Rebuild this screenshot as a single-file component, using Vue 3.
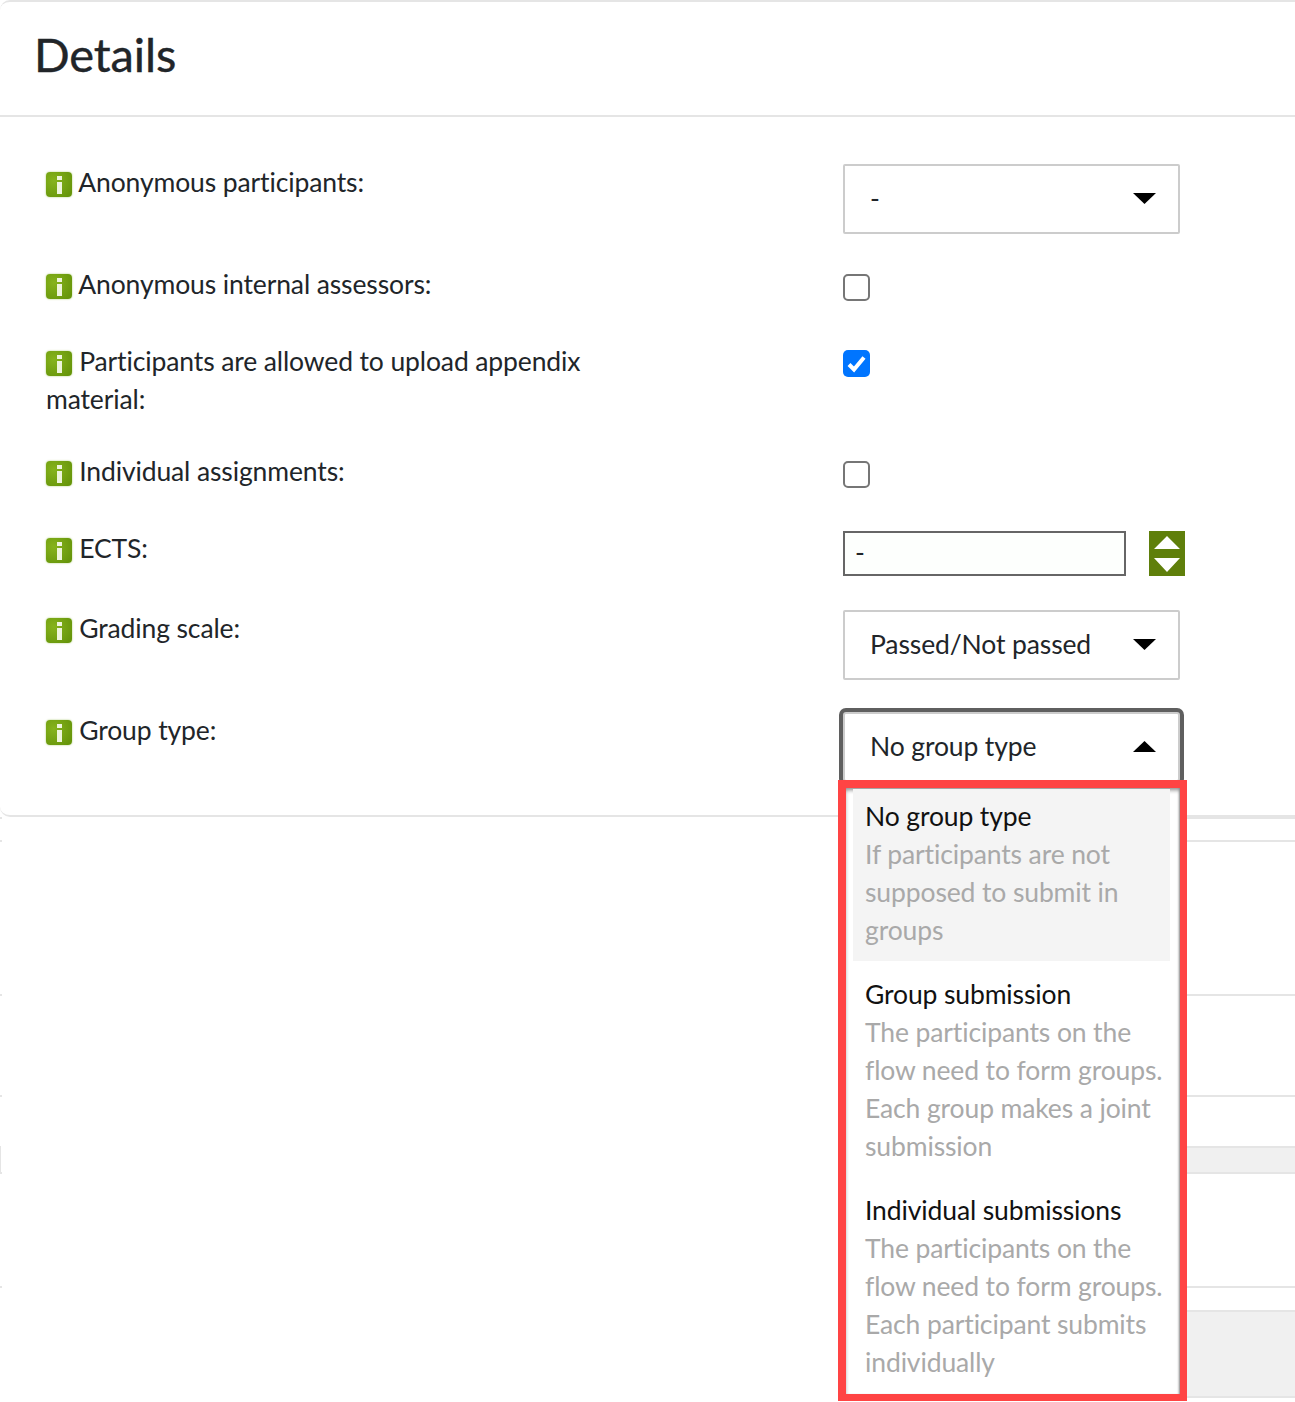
<script setup>
const rows = [
  { label: 'Anonymous participants:', type: 'select', value: '-' },
  { label: 'Anonymous internal assessors:', type: 'check', checked: false, cls: 'row--check' },
  { label: 'Participants are allowed to upload appendix material:', type: 'check', checked: true, cls: 'row--wrap' },
  { label: 'Individual assignments:', type: 'check', checked: false, cls: 'row--check' },
  { label: 'ECTS:', type: 'number', cls: 'row--number' },
  { label: 'Grading scale:', type: 'select', value: 'Passed/Not passed' },
  { label: 'Group type:', type: 'open', value: 'No group type' },
]

const options = [
  { title: 'No group type', text: 'If participants are not\nsupposed to submit in\ngroups', active: true },
  { title: 'Group submission', text: 'The participants on the\nflow need to form groups.\nEach group makes a joint\nsubmission' },
  { title: 'Individual submissions', text: 'The participants on the\nflow need to form groups.\nEach participant submits\nindividually' },
]

const lower = [
  { h: 23 },
  { h: 154 },
  { h: 101 },
  { h: 51 },
  { h: 26, band: true },
  { h: 114 },
  { h: 24 },
  { h: 88, band: true, last: true },
]
</script>

<template>
  <div class="page">
    <section class="card">
      <h1 class="card-title">Details</h1>
      <div class="card-body">
        <div v-for="r in rows" :key="r.label" :class="['row', r.cls]">
          <div class="row-label"><span class="info"></span> {{ r.label }}</div>
          <div class="row-control">
            <div v-if="r.type === 'select'" class="select">
              <span class="select-value">{{ r.value }}</span>
              <svg class="caret" viewBox="0 0 23 11"><path d="M0 0h23L11.5 11z" /></svg>
            </div>

            <span v-else-if="r.type === 'check'" :class="['check', r.checked && 'check--on']">
              <svg v-if="r.checked" viewBox="0 0 27 27">
                <path d="M6 14.5l5 5 10-12" fill="none" stroke="#fff" stroke-width="4" />
              </svg>
            </span>

            <div v-else-if="r.type === 'number'" class="number">
              <div class="number-input">-</div>
              <svg class="spinner" viewBox="0 0 36 45">
                <rect width="36" height="45" fill="#5f7f0b" />
                <path d="M5 18L18 5l13 13z M5 27h26L18 41z" fill="#fff" />
              </svg>
            </div>

            <div v-else class="select select--open">
              <span class="select-value">{{ r.value }}</span>
              <svg class="caret" viewBox="0 0 23 11"><path d="M0 11h23L11.5 0z" /></svg>
              <ul class="menu">
                <li v-for="o in options" :key="o.title" :class="['menu-item', o.active && 'menu-item--active']">
                  <div class="menu-title">{{ o.title }}</div>
                  <div class="menu-text">{{ o.text }}</div>
                </li>
              </ul>
            </div>
          </div>
        </div>
      </div>
    </section>

    <!-- what is left of the page behind the menu -->
    <div class="lower">
      <div
        v-for="(l, i) in lower"
        :key="i"
        :class="['lower-row', l.band && 'lower-row--band', l.last && 'lower-row--last']"
        :style="{ height: l.h + 'px' }"
      >
        <span class="lower-tick"></span>
        <span class="lower-cell"></span>
      </div>
    </div>
  </div>
</template>

<style>
body {
  margin: 0;
  background: #fff;
  overflow: hidden;
}
</style>

<style scoped>
.page {
  width: 1295px;
  height: 1402px;
  overflow: hidden;
  font-family: Lato, sans-serif;
  font-size: 26.5px;
  letter-spacing: -0.12px;
  line-height: 38px;
  color: #212529;
}

.card {
  border-top: 2px solid #e5e5e5;
  border-bottom: 2px solid #e5e5e5;
  border-radius: 10px 0 0 10px;
  height: 817px;
  box-sizing: border-box;
}

.card-title {
  margin: 0;
  height: 115px;
  padding: 22px 0 0 34px;
  box-sizing: border-box;
  border-bottom: 2px solid #e5e5e5;
  font-size: 47px;
  line-height: 60px;
  font-weight: 400;
  -webkit-text-stroke: 0.4px #212529;
}

.card-body {
  display: flex;
  flex-direction: column;
  gap: 32px;
  padding: 47px 0 0 46px;
}

.row {
  display: flex;
}

.row--check {
  padding-bottom: 7px;
}

.row--wrap {
  padding-bottom: 2px;
}

.row--number {
  padding-bottom: 2px;
}

.row-label {
  width: 560px;
  margin: -1px 237px 1px 0;
}

.info {
  display: inline-block;
  position: relative;
  width: 26px;
  height: 25px;
  margin-right: 0.5px;
  vertical-align: -5px;
  border-radius: 4px;
  background: radial-gradient(circle at 30% 35%, #86b31c, #66950a 85%);
  box-shadow: 0 0 2px #a5c76a;
}

.info::before,
.info::after {
  content: "";
  position: absolute;
  left: 11px;
  width: 5px;
  background: #eef5dc;
}

.info::before {
  top: 4px;
  height: 4px;
}

.info::after {
  top: 10px;
  height: 12px;
}

.row-control {
  width: 337px;
}

.select {
  position: relative;
  display: flex;
  align-items: center;
  justify-content: space-between;
  height: 70px;
  box-sizing: border-box;
  padding: 0 22px 0 25px;
  border: 2px solid #ccc;
  border-radius: 2px;
  background: #fff;
}

.select-value {
  margin-top: -3px;
}

.select--open {
  box-shadow: 0 0 0 4px #5f5f5f;
  border-radius: 3px;
}

.caret {
  width: 23px;
  height: 11px;
  margin-top: -2px;
}

.check {
  display: block;
  width: 27px;
  height: 27px;
  margin-top: 8px;
  box-sizing: border-box;
  border: 2px solid #767676;
  border-radius: 5px;
}

.check--on {
  margin-top: 7px;
  border: 0;
  background: #0075ff;
}

.check svg {
  display: block;
}

.number {
  display: flex;
  width: 342px;
  justify-content: space-between;
  margin-top: 1px;
}

.number-input {
  width: 283px;
  height: 45px;
  box-sizing: border-box;
  padding-left: 10px;
  border: 2px solid #666;
  background: #fdfffd;
  line-height: 38px;
}

.spinner {
  width: 36px;
  height: 45px;
}

.menu {
  position: absolute;
  top: 66px;
  left: -7px;
  width: 349px;
  height: 621px;
  box-sizing: border-box;
  margin: 0;
  padding: 1px 10px 0 7px;
  list-style: none;
  background: #fff;
  border: 8px solid #ff4444;
  border-width: 8px 7px 7px 8px;
  box-shadow: inset 0 3px 4px -1px #888, inset -2px 0 2px -1px #999;
  z-index: 2;
}

.menu-item {
  padding: 8px 0 12px 12px;
  margin-bottom: 6px;
}

.menu-item--active {
  background: #f4f4f4;
}

.menu-title {
  color: #111;
}

.menu-text {
  color: #a9a9a9;
  white-space: pre-line;
}

.lower-row {
  display: flex;
}

.lower-tick {
  width: 2px;
  height: 2px;
  background: #e5e5e5;
}

.lower-cell {
  width: 195px;
  margin-left: auto;
  border-top: 2px solid #e5e5e5;
}

.lower-row--band .lower-tick {
  height: 100%;
  width: 1px;
}

.lower-row--band .lower-cell {
  background: #f0f0f0;
}

.lower-row--last .lower-tick {
  display: none;
}

.lower-row--last .lower-cell {
  border-bottom: 2px solid #e5e5e5;
}
</style>
